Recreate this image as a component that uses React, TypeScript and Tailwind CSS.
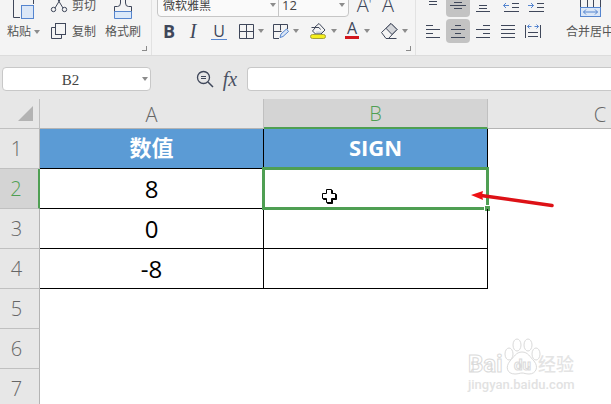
import type { ReactNode } from 'react';

const ink = '#3f475a';
const blue = '#5585cf';

interface IconProps {
  width?: number;
  height?: number;
  children: ReactNode;
}

function Icon({ width = 24, height = 24, children }: IconProps) {
  return (
    <svg
      width={width}
      height={height}
      viewBox={`0 0 ${width} ${height}`}
      fill="none"
      stroke={ink}
      className="shrink-0"
      aria-hidden="true"
    >
      {children}
    </svg>
  );
}

function Caret() {
  return (
    <svg width="6" height="4" viewBox="0 0 6 4" className="shrink-0 fill-[#8c8c8c]" aria-hidden="true">
      <path d="M0 0h6L3 4z" />
    </svg>
  );
}

interface ToolButtonProps {
  label: string;
  active?: boolean;
  caret?: boolean;
  className?: string;
  children: ReactNode;
}

function ToolButton({ label, active, caret, className = '', children }: ToolButtonProps) {
  return (
    <button
      type="button"
      aria-label={label}
      aria-pressed={active}
      className={`flex h-6 shrink-0 items-center justify-center rounded ${active ? 'bg-[#c3c3c3]' : ''} ${className}`}
    >
      {children}
      {caret && <Caret />}
    </button>
  );
}

function GroupCorner() {
  return (
    <div className="flex h-3 justify-end px-1 pt-[3px]">
      <span className="size-[5px] border-r border-b border-[#8a8a8a]" />
    </div>
  );
}

function ClipboardGroup() {
  return (
    <div className="flex w-[152px] shrink-0 flex-col border-r border-[#e2e2e2]">
      <div className="flex pl-[7px] text-xs text-[#555]">
        <button type="button" className="flex w-[34px] flex-col items-start">
          <span className="pl-[5px]">
            <Icon height={26}>
              <path d="M1.5 0V24.5H8M21.5 0V11" />
              <rect x="9.5" y="12.5" width="12" height="13" fill="#dbe7f7" stroke={blue} />
            </Icon>
          </span>
          <span className="flex h-6 items-center gap-[3px] pt-[2px]">
            粘贴
            <Caret />
          </span>
        </button>
        <div className="flex flex-col gap-[2px] pl-[9px]">
          <button type="button" className="flex h-6 items-center gap-1">
            <Icon width={18}>
              <path d="M5 15L13.5 1M13 15L4.5 1" />
              <circle cx="3.5" cy="16.5" r="2.2" />
              <circle cx="14.5" cy="16.5" r="2.2" />
            </Icon>
            <span className="pt-[2px]">剪切</span>
          </button>
          <button type="button" className="flex h-6 items-center gap-1">
            <Icon width={18}>
              <path d="M5 8.5H1.5V19.5H11.5V16" />
              <rect x="5.5" y="4.5" width="10" height="11" />
            </Icon>
            <span className="pt-[2px]">复制</span>
          </button>
        </div>
        <button type="button" className="flex flex-col items-center pl-[9px]">
          <Icon height={26}>
            <path d="M9.5 0V10q0 3.5-3 3.5h-3V19M14.5 0V10q0 3.5 3 3.5h3V19" />
            <path d="M3.5 18.5h17v7h-17z" fill="#dbe9f9" stroke={blue} />
          </Icon>
          <span className="flex h-6 items-center pt-[2px]">格式刷</span>
        </button>
      </div>
      <GroupCorner />
    </div>
  );
}

function FontGroup() {
  return (
    <div className="flex w-[264px] shrink-0 flex-col border-r border-[#e2e2e2]">
      <div className="flex flex-col gap-[2px] pl-[5px] text-[#3f475a]">
        <div className="flex h-6">
          <div className="flex w-[192px] rounded border border-[#c6c6c6] bg-[#fafafa] text-xs text-[#444]">
            <label className="relative flex w-[121px] items-center border-r border-[#c6c6c6]">
              <select aria-label="字体" className="h-full w-full appearance-none pt-[2px] pl-[5px] outline-none">
                <option>微软雅黑</option>
              </select>
              <span className="pointer-events-none absolute right-[2px]">
                <Caret />
              </span>
            </label>
            <label className="relative flex flex-1 items-center">
              <select aria-label="字号" className="h-full w-full appearance-none pt-[2px] pl-[3px] text-[13px] outline-none">
                <option>12</option>
              </select>
              <span className="pointer-events-none absolute right-[3px]">
                <Caret />
              </span>
            </label>
          </div>
          <ToolButton label="增大字号" className="ml-[3px] w-6 text-xl font-light">
            A<span className="text-sm">'</span>
          </ToolButton>
          <ToolButton label="减小字号" className="w-6 text-xl font-light">
            A
          </ToolButton>
        </div>
        <div className="flex h-6 items-center">
          <ToolButton label="加粗" className="w-6 text-lg font-bold">
            B
          </ToolButton>
          <ToolButton label="倾斜" className="w-6 font-['Liberation_Serif',serif] text-xl italic">
            I
          </ToolButton>
          <ToolButton label="下划线" className="ml-[2px] w-6">
            <span className="w-4 border-b border-[#5585cf] text-base leading-4">U</span>
          </ToolButton>
          <ToolButton label="边框" caret className="ml-[3px]">
            <Icon>
              <path d="M5.5 5.5h14v14h-14zM12.5 5.5v14M5.5 12.5h14" />
            </Icon>
          </ToolButton>
          <ToolButton label="绘制边框" caret className="ml-[5px]">
            <Icon>
              <path d="M10 19.5H4.5V5.5h14V10M4.5 12.5h8M11.5 5.5v6" />
              <path d="M11 18.5l1-3.5 5.5-5 2 2.5-5.5 5z" fill="#dbe7f7" stroke={blue} />
            </Icon>
          </ToolButton>
          <ToolButton label="填充颜色" caret className="ml-[8px]">
            <Icon>
              <path d="M9 12.5h8l-2.5 2.5h-5z" fill="#ccd2de" stroke="none" />
              <path d="M4.5 8.5h7.5l1.5 2M8 8l4-3.500 6 6.500-4 4H8.500L5.5 12 8 9" />
              <rect x="3.5" y="15.5" width="15" height="4" rx="2" fill="#f4ee1c" stroke="#a3a03a" />
            </Icon>
          </ToolButton>
          <ToolButton label="字体颜色" caret className="ml-[8px] gap-[5px]">
            <span className="mb-[2px] flex w-[14px] justify-center border-b-[3px] border-[#d2161c] text-base leading-[15px]">
              A
            </span>
          </ToolButton>
          <ToolButton label="清除" caret className="ml-[8px]">
            <Icon>
              <path d="M3.5 13.5L13 4.5l6 6-8.5 9H8zM8 19.5h10.5" />
              <path d="M8 9.3l5-4.8 6 6-5 5z" fill="#d4d6da" />
            </Icon>
          </ToolButton>
        </div>
      </div>
      <GroupCorner />
    </div>
  );
}

function AlignGroup() {
  return (
    <div className="flex shrink-0 pb-3 pl-[5px]">
      <div className="flex flex-col gap-[2px]">
        <div className="flex gap-px">
          <ToolButton label="顶端对齐">
            <Icon>
              <path d="M5 5.5h14M8 8.5h8M8 11.5h8" />
            </Icon>
          </ToolButton>
          <ToolButton label="垂直居中" active>
            <Icon>
              <path d="M8 9.5h8M4 12.5h16M8 15.5h8" />
            </Icon>
          </ToolButton>
          <ToolButton label="底端对齐">
            <Icon>
              <path d="M8 12.5h8M8 15.5h8M5 18.5h14" />
            </Icon>
          </ToolButton>
          <ToolButton label="减少缩进量">
            <Icon>
              <path d="M16 10.5h7M16 14.5h7M8 18.5h15" />
              <path d="M13 12.5H7.5M10 10l-2.5 2.5L10 15" stroke={blue} />
            </Icon>
          </ToolButton>
          <ToolButton label="增加缩进量">
            <Icon>
              <path d="M16 10.5h7M16 14.5h7M8 18.5h15" />
              <path d="M7 12.5h5.5M10 10l2.5 2.5L10 15" stroke={blue} />
            </Icon>
          </ToolButton>
        </div>
        <div className="flex gap-px">
          <ToolButton label="左对齐">
            <Icon>
              <path d="M5 6.5h7M5 10.5h14M5 14.5h7M5 18.5h14" />
            </Icon>
          </ToolButton>
          <ToolButton label="水平居中" active>
            <Icon>
              <path d="M9 6.5h6M5 10.5h14M9 14.5h6M5 18.5h14" />
            </Icon>
          </ToolButton>
          <ToolButton label="右对齐">
            <Icon>
              <path d="M12 6.5h7M5 10.5h14M12 14.5h7M5 18.5h14" />
            </Icon>
          </ToolButton>
          <ToolButton label="两端对齐">
            <Icon>
              <path d="M5 6.5h14M5 10.5h14M5 14.5h14M5 18.5h14" />
            </Icon>
          </ToolButton>
          <ToolButton label="分散对齐">
            <Icon>
              <path d="M4.5 6v13M19.5 6v13M7 13.5h10M7 17.5h10" />
              <path d="M6.5 7.5h4M13.5 7.5h4M8.5 5.5l-2 2 2 2M15.5 5.5l2 2-2 2" stroke={blue} />
            </Icon>
          </ToolButton>
        </div>
      </div>
      <button type="button" className="ml-[21px] flex flex-col items-center text-xs whitespace-nowrap text-[#555]">
        <Icon height={26}>
          <path d="M2.5 0V14M9.5 0v14M15.5 0v14M22.5 0v14" />
          <rect x="2.5" y="14.5" width="20" height="9" fill="#dbe7f7" stroke={blue} />
          <path d="M5.5 19h14M8 16.5l-2.5 2.5L8 21.5M17 16.5l2.5 2.5L17 21.5" stroke={blue} />
        </Icon>
        <span className="flex h-6 items-center pt-[2px]">合并居中</span>
      </button>
    </div>
  );
}

function FormulaBar() {
  return (
    <div className="flex items-center bg-[#e7e7e7] pt-[11px] pb-2 pl-[2px]">
      <label className="relative flex w-[149px] shrink-0 items-center">
        <input
          aria-label="名称框"
          defaultValue="B2"
          className="h-6 w-full rounded border border-[#c8c8c8] bg-white pt-[3px] pr-3 text-center font-['Liberation_Serif',serif] text-[15px] text-[#444] outline-none"
        />
        <span className="pointer-events-none absolute right-[3px]">
          <Caret />
        </span>
      </label>
      <button type="button" aria-label="查找" className="ml-[43px]">
        <Icon>
          <circle cx="9.5" cy="10.5" r="6" strokeWidth="1.3" />
          <path d="M14 15l5 5" strokeWidth="1.5" />
          <path d="M7 9.5h5M7 11.5h5" />
        </Icon>
      </button>
      <button
        type="button"
        aria-label="插入函数"
        className="ml-[2px] w-5 font-['Liberation_Serif',serif] text-xl leading-6 text-[#4b5263] italic"
      >
        fx
      </button>
      <input
        aria-label="编辑栏"
        className="ml-[7px] h-6 min-w-0 flex-1 rounded-l border border-r-0 border-[#c8c8c8] bg-white px-2 outline-none"
      />
    </div>
  );
}

const rows = [
  { id: 1, a: '数值', b: 'SIGN' },
  { id: 2, a: '8', b: '' },
  { id: 3, a: '0', b: '' },
  { id: 4, a: '-8', b: '' },
  { id: 5 },
  { id: 6 },
  { id: 7 },
];

function Selection() {
  return (
    <>
      <div className="absolute -inset-[2px] border-[3px] border-[#4f9f53]" />
      <div className="absolute -right-[3px] -bottom-[3px] size-[6px] border-t border-l border-white bg-[#4f9f53]" />
      <svg width="16" height="16" viewBox="0 0 16 16" className="absolute top-5 left-[58px]" aria-hidden="true">
        <path d="M5.5 1.5h5v4h4v5h-4v4h-5v-4h-4v-5h4z" fill="#000" stroke="#000" />
        <path d="M4.5 .5h5v4h4v5h-4v4h-5v-4h-4v-5h4z" fill="#fff" stroke="#000" />
      </svg>
      <svg width="84" height="18" viewBox="0 0 84 18" className="absolute top-[22px] left-[207px]" aria-hidden="true">
        <path d="M10 4.5L81 14.5" stroke="#dd1116" strokeWidth="3.5" strokeLinecap="round" />
        <path d="M0 4L12 0l-1 4 1 5z" fill="#ee1114" />
      </svg>
    </>
  );
}

function Sheet() {
  const columnHead = 'border-b border-b-[#b4b4b4] bg-[#e7e7e7] p-0 pt-[2px] font-light text-[#666]';

  return (
    <table className="w-[712px] table-fixed border-separate border-spacing-0 text-center">
      <colgroup>
        <col className="w-10" />
        <col className="w-56" />
        <col className="w-56" />
        <col className="w-56" />
      </colgroup>
      <thead>
        <tr className="h-[30px] text-xl leading-[26px]">
          <th className="border-r border-b border-[#c0c0c0] bg-[#e7e7e7] p-0">
            <svg width="15" height="15" viewBox="0 0 15 15" className="mr-[6px] ml-auto fill-[#b3b3b3]" aria-hidden="true">
              <path d="M15 0v15H0z" />
            </svg>
          </th>
          <th className={`${columnHead} border-r border-r-[#c0c0c0]`}>A</th>
          <th className="border-r border-b-2 border-r-[#c0c0c0] border-b-[#4f9f53] bg-[#d4d4d4] p-0 pt-[2px] font-light text-[#4f9f53]">
            B
          </th>
          <th className={columnHead}>C</th>
        </tr>
      </thead>
      <tbody>
        {rows.map((row) => {
          const selected = row.id === 2;
          const filled = row.a !== undefined;
          const cell =
            row.id === 1
              ? 'bg-[#5b9bd5] pb-1 text-[22px] leading-8 font-bold text-white'
              : 'text-2xl leading-8 text-black';
          const line = filled ? 'border-r border-b border-black' : '';

          return (
            <tr key={row.id} className="h-10">
              <th
                className={`border-b border-b-[#c0c0c0] p-0 pr-[6px] text-xl font-light ${
                  selected
                    ? 'border-r-2 border-r-[#4f9f53] bg-[#d4d4d4] text-[#4f9f53]'
                    : 'border-r border-r-[#b4b4b4] bg-[#e7e7e7] text-[#666]'
                }`}
              >
                {row.id}
              </th>
              <td className={`px-0 ${line} ${cell}`}>{row.a}</td>
              <td className={`relative px-0 ${line} ${cell}`}>
                {row.b}
                {selected && <Selection />}
              </td>
              <td />
            </tr>
          );
        })}
      </tbody>
    </table>
  );
}

function Watermark() {
  return (
    <svg
      width="112"
      height="58"
      viewBox="0 0 112 58"
      fill="#fff"
      stroke="#dadada"
      className="pointer-events-none absolute right-8 bottom-2 font-[Roboto,'Noto_Sans_CJK_SC',sans-serif]"
    >
      <text x="1" y="34" fontSize="24" fontWeight="700">Bai</text>
      <ellipse cx="42" cy="16" rx="4" ry="6" />
      <ellipse cx="50" cy="7" rx="4" ry="6" />
      <ellipse cx="61" cy="7" rx="4" ry="6" />
      <ellipse cx="69" cy="16" rx="4" ry="6" />
      <path d="M55 14c6 0 8 5 12 9 5 6 2 13-5 13-3 0-5-1-7-1s-4 1-7 1c-8 0-10-7-5-13 4-4 6-9 12-9z" />
      <text x="47" y="32" fontSize="15" fontWeight="700">du</text>
      <text x="71" y="33" fontSize="18" fontWeight="500" fill="#e4e4e4" stroke="none">经验</text>
      <text x="1" y="51" fontSize="13" fontWeight="500" fill="#e2e2e2" stroke="none">jingyan.baidu.com</text>
    </svg>
  );
}

export default function App() {
  return (
    <div className="relative flex h-screen flex-col overflow-hidden bg-white font-['Open_Sans','Noto_Sans_CJK_SC',sans-serif]">
      <div className="flex h-14 shrink-0 items-end overflow-hidden border-b border-[#dcdcdc] bg-[#f4f4f4]">
        <ClipboardGroup />
        <FontGroup />
        <AlignGroup />
      </div>
      <FormulaBar />
      <div className="min-h-0 flex-1 overflow-hidden">
        <Sheet />
      </div>
      <Watermark />
    </div>
  );
}
